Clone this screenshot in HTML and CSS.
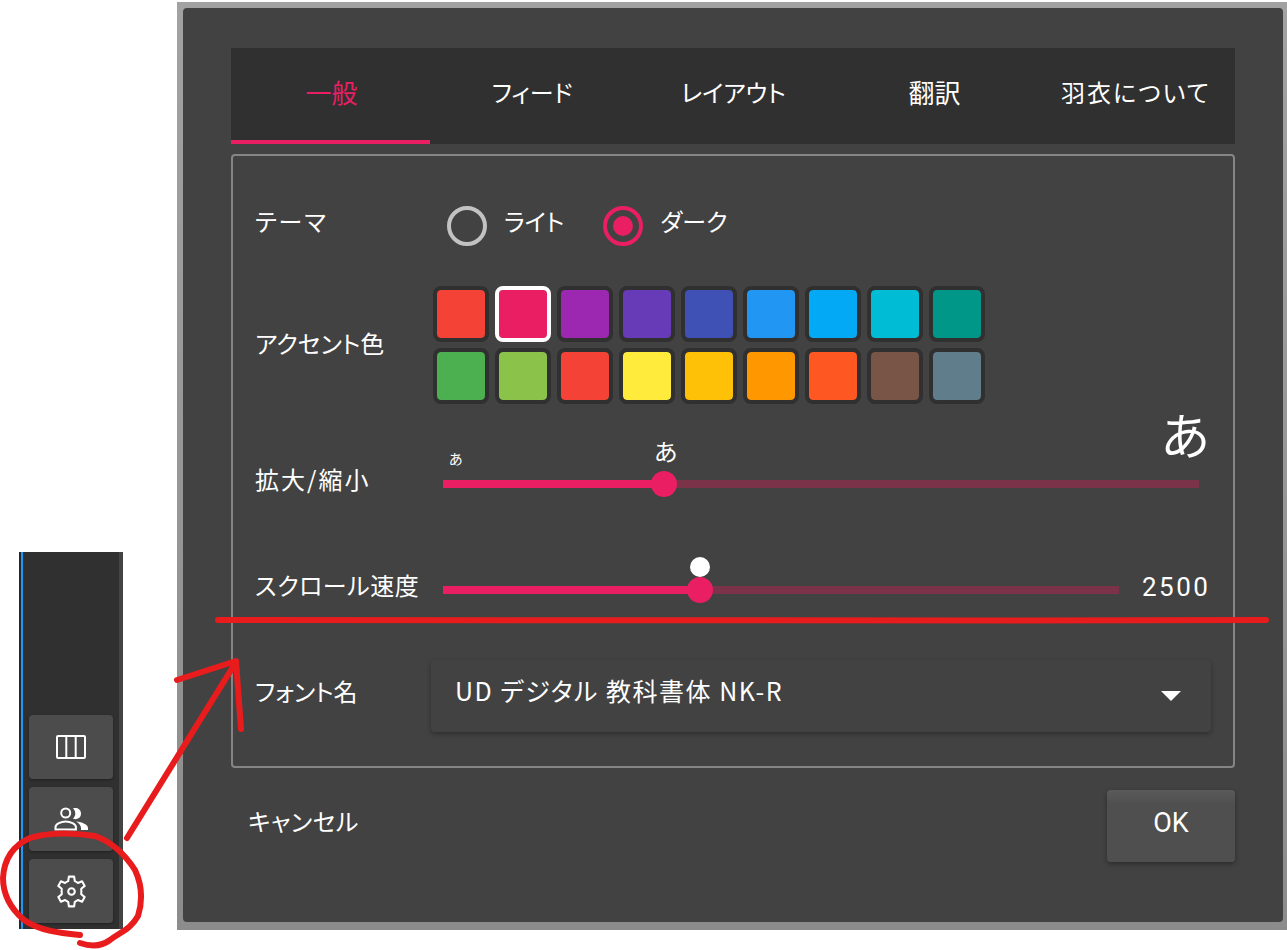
FILE: index.html
```html
<!DOCTYPE html>
<html lang="ja">
<head>
    <meta charset="UTF-8">
    <meta name="viewport" content="width=device-width, initial-scale=1.0">
    <title>羽衣 設定</title>
    <link rel="stylesheet" href="styles.css">
</head>
<body>
    <div class="sidebar">
        <button class="side-btn">
            <svg width="30" height="24" viewBox="0 0 30 24" fill="none" stroke="#fff" stroke-width="2"><rect x="1" y="1" width="28" height="22" rx="1"/><path d="M10.3 1v22M19.7 1v22"/></svg>
        </button>
        <button class="side-btn">
            <svg width="36" height="36" viewBox="0 0 36 36" fill="none" stroke="#fff" stroke-width="2">
                <circle cx="12.7" cy="12" r="4.5"/>
                <path d="M2.5 28.5v-2.5c0-3 5.5-5.5 10.2-5.5s10.2 2.5 10.2 5.5v2.5z"/>
                <path stroke="none" fill="#fff" d="M20 7.2c4-1 8 .8 8 5.3s-4 6.5-8 5.3c1.5-1.5 2.3-3.3 2.3-5.3s-.8-3.8-2.3-5.3z"/>
                <path stroke="none" fill="#fff" d="M23 20.5c6 .5 12 3 12 6.5v2h-7v-2c0-2.5-2-5-5-6.5z"/>
            </svg>
        </button>
        <button class="side-btn">
            <svg width="33" height="33" viewBox="2 2 20 20" fill="none" stroke="#fff" stroke-width="1.25" stroke-linejoin="round">
                <path d="M10.4 3h3.2l.4 2.7c.7.3 1.3.6 1.9 1.1l2.5-1 1.6 2.8-2.1 1.7c.1 1.1.1 2.3 0 3.4l2.1 1.7-1.6 2.8-2.5-1c-.6.5-1.2.8-1.9 1.1l-.4 2.7h-3.2l-.4-2.7c-.7-.3-1.3-.6-1.9-1.1l-2.5 1-1.6-2.8 2.1-1.7c-.1-1.1-.1-2.3 0-3.4L4 8.6l1.6-2.8 2.5 1c.6-.5 1.2-.8 1.9-1.1z"/>
                <circle cx="12" cy="12" r="2"/>
            </svg>
        </button>
    </div>

    <div class="dialog-frame">
        <div class="dialog">
            <div class="tabs">
                <div class="tab tab-kanji active">一般</div>
                <div class="tab">フィード</div>
                <div class="tab">レイアウト</div>
                <div class="tab tab-kanji">翻訳</div>
                <div class="tab tab-about">羽衣について</div>
            </div>

            <div class="panel">
                <div class="row row-theme">
                    <div class="row-label label-wide">テーマ</div>
                    <div class="control radios">
                        <span class="radio"></span><span class="radio-text">ライト</span>
                        <span class="radio checked"></span><span class="radio-text">ダーク</span>
                    </div>
                </div>

                <div class="row row-accent">
                    <div class="row-label">アクセント色</div>
                    <div class="swatches">
                        <span class="swatch c-red"></span>
                        <span class="swatch c-pink selected"></span>
                        <span class="swatch c-purple"></span>
                        <span class="swatch c-deep-purple"></span>
                        <span class="swatch c-indigo"></span>
                        <span class="swatch c-blue"></span>
                        <span class="swatch c-light-blue"></span>
                        <span class="swatch c-cyan"></span>
                        <span class="swatch c-teal"></span>
                        <span class="swatch c-green"></span>
                        <span class="swatch c-light-green"></span>
                        <span class="swatch c-red"></span>
                        <span class="swatch c-yellow"></span>
                        <span class="swatch c-amber"></span>
                        <span class="swatch c-orange"></span>
                        <span class="swatch c-deep-orange"></span>
                        <span class="swatch c-brown"></span>
                        <span class="swatch c-blue-grey"></span>
                    </div>
                </div>

                <div class="row row-zoom">
                    <div class="row-label label-wide">拡大/縮小</div>
                    <div class="slider slider-zoom">
                        <div class="track"><div class="track-fill fill-zoom"></div></div>
                        <span class="thumb thumb-zoom"></span>
                        <span class="mark mark-small">あ</span>
                        <span class="mark mark-mid">あ</span>
                        <span class="mark mark-big">あ</span>
                    </div>
                </div>

                <div class="row row-speed">
                    <div class="row-label label-speed">スクロール速度</div>
                    <div class="slider slider-speed">
                        <div class="track"><div class="track-fill fill-speed"></div></div>
                        <span class="thumb thumb-speed"></span>
                        <span class="bubble"></span>
                    </div>
                    <div class="speed-value">2500</div>
                </div>

                <div class="row row-font">
                    <div class="row-label">フォント名</div>
                    <div class="select">
                        <span class="select-text">UD デジタル 教科書体 NK-R</span>
                        <span class="caret"></span>
                    </div>
                </div>
            </div>

            <div class="footer">
                <button class="btn-cancel">キャンセル</button>
                <button class="btn-ok">OK</button>
            </div>
        </div>
    </div>

    <!-- 赤い手書きの注釈 -->
    <svg class="notes" width="1287" height="950" viewBox="0 0 1287 950" fill="none" stroke="#e81c1c" stroke-width="6" stroke-linecap="round" stroke-linejoin="round">
        <path d="M218 620C500 620 900 621 1266 620"/>
        <path d="M127 838L236 662"/>
        <path d="M177 680L236 661L241 729"/>
        <path d="M80 935C60 933 40 931 24 920C10 908 3 895 3 878C4 860 12 846 30 838C50 832 75 833 95 836C112 842 126 856 135 870C142 885 143 900 138 916C130 930 120 932 110 940C102 946 92 947 80 943"/>
    </svg>
</body>
</html>
```

FILE: styles.css
```css
* { box-sizing: border-box; }
body { margin: 0; height: 950px; background: #fff; overflow: hidden; color: #fff; font-family: "Noto Sans CJK JP", "Noto Sans", sans-serif; font-size: 24px; font-feature-settings: "palt"; }
button { font: inherit; color: #fff; border: none; padding: 0; }

/* screenshot pieces placed on the white page */
.sidebar { position: absolute; left: 19px; top: 552px; width: 104px; height: 377px; padding: 163px 6px 0 8px; display: flex; flex-direction: column; gap: 8px; background: #303030; border-left: 2px solid #1d2a35; border-right: 4px solid #444; box-shadow: inset 2px 0 0 #2196f3; }
.side-btn { width: 84px; height: 64px; flex: none; display: flex; align-items: center; justify-content: center; background: #4c4c4c; border-radius: 4px; box-shadow: 0 1px 3px rgba(0,0,0,0.3); }

.dialog-frame { position: absolute; left: 177px; top: 2px; width: 1110px; height: 928px; padding: 6px 4px 8px 6px; background: linear-gradient(#a2a2a2, #8c8c8c); }
.dialog { height: 100%; padding: 40px 48px; background: #424242; border-radius: 4px; display: flex; flex-direction: column; }

.tabs { display: flex; height: 96px; flex: none; background: #303030; }
.tab { flex: 1; height: 96px; padding-left: 3px; line-height: 88px; text-align: center; }
.tab.active { flex: none; width: 199px; padding-left: 2px; color: #e91e63; border-bottom: 4px solid #e91e63; }
.tab-kanji { font-size: 26px; }
.tab-about { letter-spacing: 2px; }

.panel { height: 614px; margin-top: 10px; padding: 50px 0 0 22px; border: 2px solid #858585; border-radius: 4px; flex: none; }
.row { display: flex; align-items: center; }
.row-label { width: 176px; flex: none; line-height: 32px; margin-bottom: 11px; }
.label-wide { letter-spacing: 2px; }
.label-speed { letter-spacing: 0.5px; }
.row-theme { height: 40px; }
.row-accent { height: 118px; margin-top: 40px; }
.row-accent .row-label { width: 178px; margin-bottom: 5px; }
.row-zoom { height: 26px; margin-top: 67px; }
.row-speed { height: 26px; margin-top: 80px; }
.row-speed .row-label { margin-bottom: 10px; }
.row-font { height: 72px; margin-top: 57px; }

.radios { display: flex; align-items: center; padding-left: 16px; }
.radio { width: 40px; height: 40px; border-radius: 50%; border: 4px solid #c2c2c2; flex: none; display: flex; align-items: center; justify-content: center; }
.radio.checked { border-color: #e91e63; margin-left: 39px; }
.radio.checked::after { content: ""; width: 20px; height: 20px; border-radius: 50%; background: #e91e63; }
.radio-text { margin-left: 17px; margin-bottom: 11px; line-height: 32px; }

.swatches { display: grid; grid-template-columns: repeat(9, 56px); grid-auto-rows: 56px; gap: 6px; }
.swatch { border: 4px solid #303030; border-radius: 8px; background-clip: padding-box; }
.swatch.selected { border-color: #fff; }
.c-red { background-color: #f44336; }
.c-pink { background-color: #e91e63; }
.c-purple { background-color: #9c27b0; }
.c-deep-purple { background-color: #673ab7; }
.c-indigo { background-color: #3f51b5; }
.c-blue { background-color: #2196f3; }
.c-light-blue { background-color: #03a9f4; }
.c-cyan { background-color: #00bcd4; }
.c-teal { background-color: #009688; }
.c-green { background-color: #4caf50; }
.c-light-green { background-color: #8bc34a; }
.c-yellow { background-color: #ffeb3b; }
.c-amber { background-color: #ffc107; }
.c-orange { background-color: #ff9800; }
.c-deep-orange { background-color: #ff5722; }
.c-brown { background-color: #795548; }
.c-blue-grey { background-color: #607d8b; }

.slider { position: relative; height: 26px; margin-left: 12px; display: flex; align-items: center; flex: none; }
.slider-zoom { width: 756px; }
.slider-speed { width: 676px; }
.track { width: 100%; height: 8px; background: #7b3349; }
.track-fill { height: 100%; background: #e91e63; }
.fill-zoom { width: 29.4%; }
.fill-speed { width: 38%; }
.thumb { position: absolute; top: 0; width: 26px; height: 26px; margin-left: -13px; border-radius: 50%; background: #e91e63; }
.thumb-zoom { left: 221px; }
.thumb-speed { left: 257px; }
.bubble { position: absolute; left: 247px; top: -20px; width: 20px; height: 20px; border-radius: 50%; background: #fff; }
.mark { position: absolute; line-height: 1; }
.mark-small { left: 6px; top: -20px; font-size: 14px; }
.mark-mid { left: 211px; top: -32px; font-size: 24px; }
.mark-big { left: 718px; top: -63px; font-size: 50px; }
.speed-value { margin-left: 23px; margin-bottom: 6px; font-family: "Roboto", sans-serif; font-size: 26px; letter-spacing: 2.5px; line-height: 32px; }

.select { width: 780px; height: 72px; padding: 0 30px 12px 24px; display: flex; align-items: center; justify-content: space-between; background: #424242; border-radius: 4px; box-shadow: 0 2px 5px rgba(0,0,0,0.3); }
.select-text { font-size: 25px; letter-spacing: 1.5px; }
.caret { width: 0; height: 0; margin-top: 12px; border-left: 10px solid transparent; border-right: 10px solid transparent; border-top: 10px solid #fff; }

.footer { display: flex; justify-content: space-between; align-items: center; margin-top: 22px; }
.btn-cancel { background: none; padding: 0 0 12px 17px; letter-spacing: 0.4px; }
.btn-ok { width: 128px; height: 72px; padding-bottom: 6px; background: linear-gradient(#5a5a5a, #4f4f4f 20%); border-radius: 4px; box-shadow: 0 2px 5px rgba(0,0,0,0.35); font-family: "Roboto", sans-serif; font-size: 27px; }

.notes { position: absolute; left: 0; top: 0; pointer-events: none; }
```
